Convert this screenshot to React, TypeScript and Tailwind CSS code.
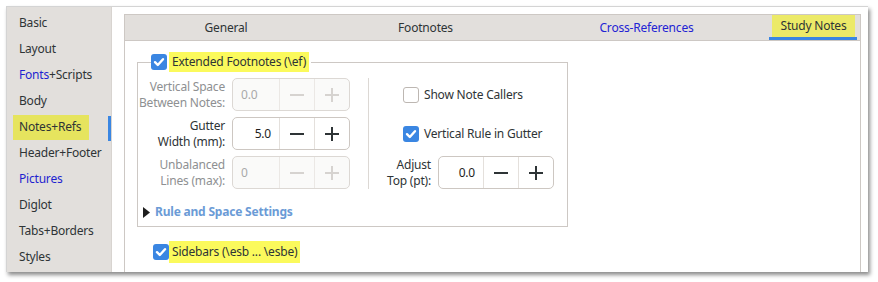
import React from "react";

const font = { fontFamily: '"Noto Sans", "Open Sans", sans-serif', letterSpacing: "-0.2px" };

const sideItems = [
  "Basic",
  "Layout",
  "Fonts+Scripts",
  "Body",
  "Notes+Refs",
  "Header+Footer",
  "Pictures",
  "Diglot",
  "Tabs+Borders",
  "Styles",
];

const Check: React.FC<{ on: boolean }> = ({ on }) =>
  on ? (
    <span className="w-[16px] h-[16px] rounded-[3px] bg-[#3a86e2] flex items-center justify-center shrink-0">
      <svg width="12" height="12" viewBox="0 0 12 12">
        <path d="M2 6.2 L4.8 9 L10 3.2" stroke="white" strokeWidth="2.4" fill="none" strokeLinecap="round" strokeLinejoin="round" />
      </svg>
    </span>
  ) : (
    <span className="w-[16px] h-[16px] rounded-[3px] border border-[#bdb7b2] bg-white shrink-0" />
  );

const Minus: React.FC<{ dim?: boolean }> = ({ dim }) => (
  <svg width="16" height="16" viewBox="0 0 16 16">
    <path d="M1 8 H15" stroke={dim ? "#d6d3d0" : "#2e3436"} strokeWidth="2" />
  </svg>
);

const Plus: React.FC<{ dim?: boolean }> = ({ dim }) => (
  <svg width="16" height="16" viewBox="0 0 16 16">
    <path d="M1 8 H15 M8 1 V15" stroke={dim ? "#d6d3d0" : "#2e3436"} strokeWidth="2" />
  </svg>
);

interface SpinProps {
  value: string;
  entry: number;
  dim?: boolean;
  left?: boolean;
}

const Spin: React.FC<SpinProps> = ({ value, entry, dim, left }) => (
  <div
    className={`flex h-[33px] rounded-[5px] border ${
      dim ? "border-[#dcd8d4] bg-[#fafaf9]" : "border-[#cdc7c2] bg-white"
    }`}
  >
    <div
      style={{ width: entry }}
      className={`flex items-center px-[8px] text-[12px] ${left ? "justify-start" : "justify-end"} ${
        dim ? "text-[#a9a9a9]" : "text-[#1e1e1e]"
      }`}
    >
      {value}
    </div>
    <div className={`w-[35px] flex items-center justify-center border-l ${dim ? "border-[#ebe8e5]" : "border-[#e4e0dc]"}`}>
      <Minus dim={dim} />
    </div>
    <div className={`w-[35px] flex items-center justify-center border-l ${dim ? "border-[#ebe8e5]" : "border-[#e4e0dc]"}`}>
      <Plus dim={dim} />
    </div>
  </div>
);

const Label: React.FC<{ lines: string[]; dim?: boolean; w: number }> = ({ lines, dim, w }) => (
  <div
    style={{ width: w }}
    className={`text-right text-[12px] leading-[16px] ${dim ? "text-[#8e9092]" : "text-[#2e3436]"}`}
  >
    {lines.map((l) => (
      <div key={l} className="whitespace-nowrap">{l}</div>
    ))}
  </div>
);

export default function App() {
  return (
    <div className="w-[878px] h-[282px] bg-white pt-[6px] pl-[6px]" style={font}>
      <div className="w-[862px] h-[266px] flex border-t border-l border-[#d4d4d4] shadow-[2px_3px_4px_rgba(0,0,0,0.45)]">
        {/* sidebar */}
        <div className="w-[104px] h-full bg-[#e2dfdc] pt-[3px] flex flex-col">
          {sideItems.map((item) => {
            const sel = item === "Notes+Refs";
            return (
              <div key={item} className="h-[26px] flex items-center justify-between pl-[6px]">
                <span
                  className={`h-[25px] flex items-center px-[6px] text-[12px] ${
                    sel ? "bg-[#e6e45e] w-[76px]" : ""
                  } ${item === "Pictures" ? "text-[#1f1fd0]" : "text-[#2e3436]"}`}
                >
                  {item === "Fonts+Scripts" ? (
                    <>
                      <span className="text-[#1f1fd0]">Fonts</span>+Scripts
                    </>
                  ) : (
                    item
                  )}
                </span>
                {sel && <span className="w-[3px] h-[25px] mt-[2px] bg-[#3a86e2]" />}
              </div>
            );
          })}
        </div>

        {/* main */}
        <div className="flex-1 h-full bg-white pl-[12px] pt-[7px] border-l border-[#d8d4d0]">
          <div className="w-[737px] h-full border border-b-0 border-[#cdc8c4] flex flex-col">
            {/* tabs */}
            <div className="h-[26px] flex bg-[#e2dfdc] border-b border-[#cdc8c4] text-[12px]">
              <div className="w-[202px] flex items-center justify-center text-[#2e3436]">General</div>
              <div className="w-[197px] flex items-center justify-center text-[#2e3436]">Footnotes</div>
              <div className="w-[245px] flex items-center justify-center text-[#2222d4]">Cross-References</div>
              <div className="w-[88px] flex flex-col">
                <div className="flex-1 ml-[3px] mr-[2px] bg-[#ecea68] flex items-center justify-center text-[#2e3436]">
                  Study Notes
                </div>
                <div className="h-[3px] bg-[#3a86e2]" />
              </div>
            </div>

            {/* content */}
            <div className="flex-1 pl-[12px] pt-[11px]">
              <fieldset className="w-[431px] border border-[#cdc8c4] pb-[6px]">
                <legend className="ml-[13px] flex items-center gap-[2px] pr-[2px]">
                  <Check on />
                  <span className="h-[20px] px-[3px] flex items-center bg-[#fbfa5c] text-[12px] text-[#2e3436]">
                    Extended Footnotes (\ef)
                  </span>
                </legend>

                <div className="flex pt-[6px]">
                  <div className="flex flex-col gap-[6px] pl-[1px]">
                    <div className="flex items-center gap-[7px]">
                      <Label w={86} dim lines={["Vertical Space", "Between Notes:"]} />
                      <Spin value="0.0" entry={46} dim left />
                    </div>
                    <div className="flex items-center gap-[7px]">
                      <Label w={86} lines={["Gutter", "Width (mm):"]} />
                      <Spin value="5.0" entry={46} />
                    </div>
                    <div className="flex items-center gap-[7px]">
                      <Label w={86} dim lines={["Unbalanced", "Lines (max):"]} />
                      <Spin value="0" entry={46} dim left />
                    </div>
                  </div>

                  <div className="w-px bg-[#dcd8d4] ml-[18px]" />

                  <div className="flex flex-col gap-[6px]">
                    <div className="h-[33px] flex items-center gap-[5px] pl-[34px] text-[12px] text-[#2e3436]">
                      <Check on={false} />
                      Show Note Callers
                    </div>
                    <div className="h-[33px] flex items-center gap-[5px] pl-[34px] text-[12px] text-[#2e3436]">
                      <Check on />
                      Vertical Rule in Gutter
                    </div>
                    <div className="flex items-center gap-[7px]">
                      <Label w={62} lines={["Adjust", "Top (pt):"]} />
                      <Spin value="0.0" entry={44} />
                    </div>
                  </div>
                </div>

                <div className="flex items-center gap-[5px] pl-[5px] mt-[15px] h-[16px]">
                  <svg width="7" height="11" viewBox="0 0 7 11">
                    <path d="M0 0 L7 5.5 L0 11 Z" fill="#1e1e1e" />
                  </svg>
                  <span className="text-[12px] font-bold text-[#6b9bd6]">Rule and Space Settings</span>
                </div>
              </fieldset>

              <div className="flex items-center mt-[14px] pl-[16px]">
                <Check on />
                <span className="h-[22px] px-[3px] flex items-center bg-[#fbfa5c] text-[12px] text-[#2e3436]">
                  Sidebars (\esb ... \esbe)
                </span>
              </div>
            </div>
          </div>
        </div>
      </div>
    </div>
  );
}
